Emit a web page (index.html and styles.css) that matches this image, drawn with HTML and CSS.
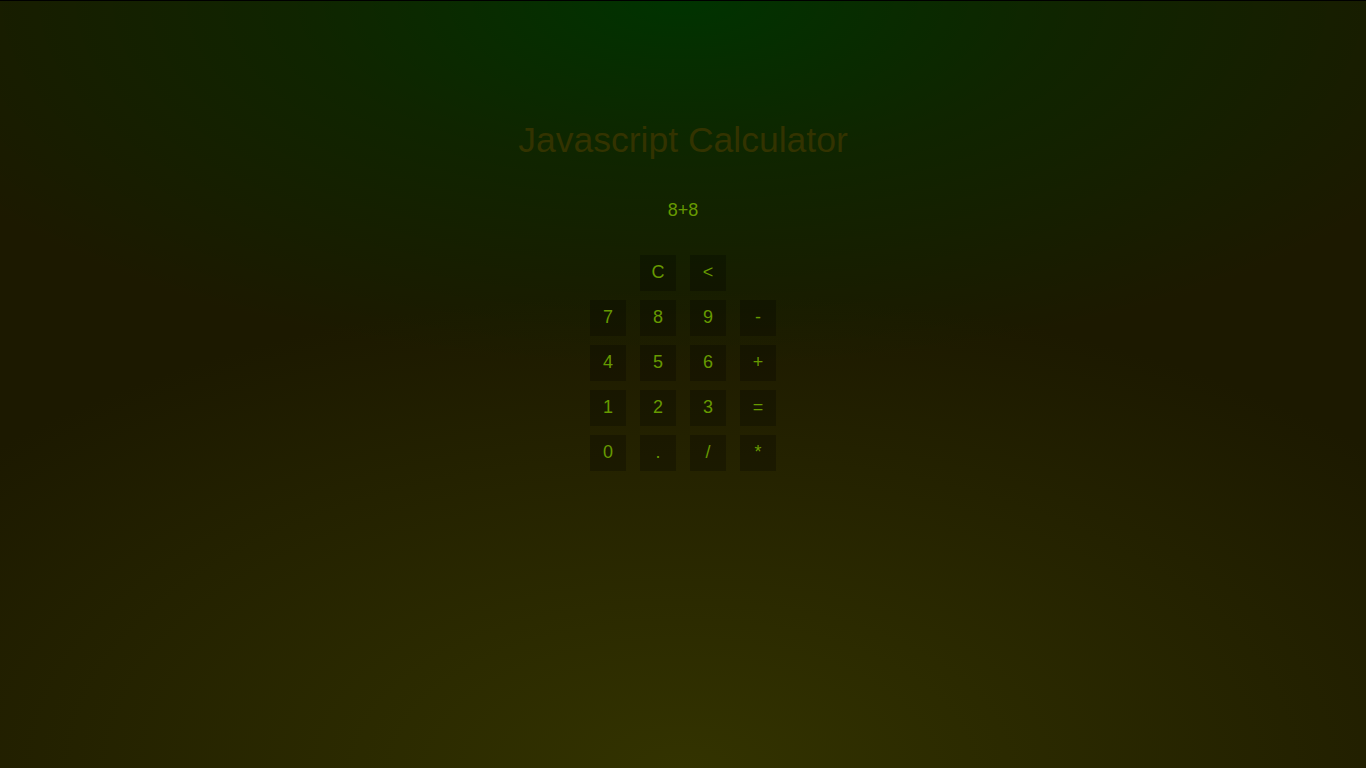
FILE: index.html
```html
<!DOCTYPE html>
<html lang="en">
<head>
<meta charset="utf-8">
<title>Javascript Calculator</title>
<link rel="stylesheet" href="styles.css">
</head>
<body>
<main class="page">
  <h1 class="title">Javascript Calculator</h1>
  <div class="display">8+8</div>
  <div class="keys">
    <button class="key k-c">C</button>
    <button class="key">&lt;</button>
    <button class="key k-row">7</button>
    <button class="key">8</button>
    <button class="key">9</button>
    <button class="key">-</button>
    <button class="key">4</button>
    <button class="key">5</button>
    <button class="key">6</button>
    <button class="key">+</button>
    <button class="key">1</button>
    <button class="key">2</button>
    <button class="key">3</button>
    <button class="key">=</button>
    <button class="key">0</button>
    <button class="key">.</button>
    <button class="key">/</button>
    <button class="key">*</button>
  </div>
</main>
</body>
</html>
```

FILE: styles.css
```css
html, body {
  margin: 0;
  padding: 0;
  height: 100%;
}
body {
  border-top: 1px solid #000;
  box-sizing: border-box;
  font-family: "Liberation Sans", Arial, sans-serif;
  background-color: #1c1900;
  background-image:
    radial-gradient(ellipse 62% 48% at 50% 0%, #003300 0%, rgba(0, 51, 0, 0.45) 45%, rgba(0, 51, 0, 0) 100%),
    radial-gradient(ellipse 68% 62% at 50% 100%, #333300 0%, rgba(51, 51, 0, 0.5) 50%, rgba(51, 51, 0, 0) 100%);
  background-repeat: no-repeat;
  overflow: hidden;
}
.page {
  display: flex;
  flex-direction: column;
  align-items: center;
  padding-top: 119px;
}
.title {
  margin: 0;
  font-size: 35.5px;
  line-height: 41px;
  font-weight: normal;
  color: #333300;
}
.display {
  margin-top: 39px;
  font-size: 18px;
  line-height: 21px;
  color: #669900;
}
.keys {
  margin-top: 34px;
  display: grid;
  grid-template-columns: repeat(4, 36px);
  grid-auto-rows: 36px;
  column-gap: 14px;
  row-gap: 9px;
}
.key {
  width: 36px;
  height: 36px;
  padding: 0 0 2px;
  border: none;
  background: rgba(0, 0, 0, 0.25);
  color: #669900;
  font-family: "Liberation Sans", Arial, sans-serif;
  font-size: 18px;
  line-height: 34px;
}
.k-c {
  grid-column-start: 2;
}
.k-row {
  grid-column-start: 1;
}
```
